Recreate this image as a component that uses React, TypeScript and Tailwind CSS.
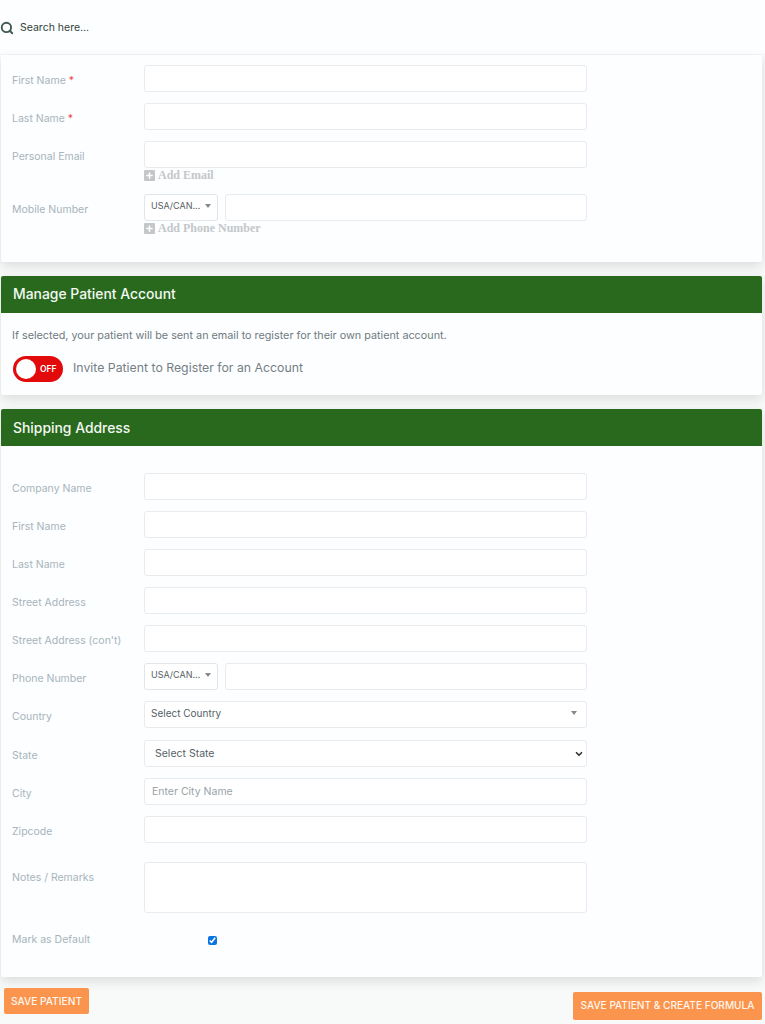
import { Search, Plus, ChevronDown } from "lucide-react";
import type { ReactNode } from "react";

const input = "h-[27px] w-[443px] rounded-[3px] border border-[#e8ecef] bg-white";

function Row({ label, required, children, className }: { label: string; required?: boolean; children: ReactNode; className?: string }) {
  return (
    <div className={`flex items-start ${className ?? ""}`}>
      <label className="w-[143px] shrink-0 pl-[11px] pt-[9px] text-[10.5px] leading-[14px] text-[#a8b4bb]">
        {label}
        {required && <span className="text-[#ef4444]"> *</span>}
      </label>
      {children}
    </div>
  );
}

function AddLink({ text }: { text: string }) {
  return (
    <div className="flex h-[12px] items-center gap-[3px] font-['Liberation_Serif',serif] text-[12px] font-bold leading-[12px] text-[#c4c7c9]">
      <span className="flex h-[11px] w-[11px] items-center justify-center rounded-[1px] bg-[#c4c7c9]">
        <Plus size={9} strokeWidth={4} className="text-white" />
      </span>
      {text}
    </div>
  );
}

function PhoneInput() {
  return (
    <div className="flex w-[443px] gap-[7px]">
      <div className="flex h-[27px] w-[74px] shrink-0 items-center justify-between rounded-[3px] border border-[#e2e6e9] bg-white pb-[3px] pl-[6px] pr-[6px] text-[9px] text-[#555f66]">
        USA/CAN...
        <span className="h-0 w-0 border-x-[3px] border-t-[4px] border-x-transparent border-t-[#888]" />
      </div>
      <div className="h-[27px] flex-1 rounded-[3px] border border-[#e8ecef] bg-white" />
    </div>
  );
}

function CardHeader({ title, className }: { title: string; className?: string }) {
  return (
    <div className={`flex h-[37px] items-center rounded-t-[2px] bg-[#28691e] pl-[12px] text-[13.9px] font-medium text-[#f4f8f2] ${className ?? ""}`}>
      {title}
    </div>
  );
}

export default function App() {
  return (
    <div className="h-[1024px] overflow-hidden bg-[#f8f9f9] font-['Inter',sans-serif]">
      <div className="flex h-[55px] items-center border-b border-[#f4f6f7] bg-[#fcfeff] pt-[1px]">
        <Search size={14} strokeWidth={3.2} className="text-[#3f5a4b]" />
        <span className="ml-[6px] text-[10.5px] text-[#33433b]">Search here...</span>
      </div>

      <div className="ml-[1px] flex h-[207px] w-[761px] flex-col gap-[11px] rounded-b-[2px] bg-[#fcfeff] pt-[10px] shadow-[0_4px_12px_rgba(0,0,0,0.12)]">
        <Row label="First Name" required><div className={input} /></Row>
        <Row label="Last Name" required><div className={input} /></Row>
        <Row label="Personal Email">
          <div>
            <div className={input} />
            <div className="mt-[1px]"><AddLink text="Add Email" /></div>
          </div>
        </Row>
        <Row label="Mobile Number" className="mt-[2px]">
          <div>
            <PhoneInput />
            <div className="mt-[1px]"><AddLink text="Add Phone Number" /></div>
          </div>
        </Row>
      </div>

      <div className="ml-[1px] mt-[14px] h-[119px] w-[761px] rounded-[2px] bg-[#fcfeff] shadow-[0_4px_12px_rgba(0,0,0,0.12)]">
        <CardHeader title="Manage Patient Account" />
        <p className="pl-[11px] pt-[16px] text-[10.8px] leading-[14px] text-[#6f7a80]">
          If selected, your patient will be sent an email to register for their own patient account.
        </p>
        <div className="mt-[13px] flex items-center pl-[12px]">
          <div className="flex h-[26px] w-[50px] items-center rounded-full bg-[#e20a0a] pl-[3px]">
            <span className="h-[20px] w-[20px] rounded-full bg-white" />
            <span className="ml-[4px] text-[8.5px] font-semibold text-white">OFF</span>
          </div>
          <span className="mb-[2px] ml-[10px] text-[12.3px] text-[#767f85]">Invite Patient to Register for an Account</span>
        </div>
      </div>

      <div className="ml-[1px] mt-[14px] h-[568px] w-[761px] rounded-[2px] bg-[#fcfeff] shadow-[0_4px_12px_rgba(0,0,0,0.12)]">
        <CardHeader title="Shipping Address" className="pt-[1px]" />
        <div className="flex flex-col gap-[11px] pt-[27px]">
          <Row label="Company Name"><div className={input} /></Row>
          <Row label="First Name"><div className={input} /></Row>
          <Row label="Last Name"><div className={input} /></Row>
          <Row label="Street Address"><div className={input} /></Row>
          <Row label="Street Address (con't)"><div className={input} /></Row>
          <Row label="Phone Number"><PhoneInput /></Row>
          <Row label="Country">
            <div className={`${input} flex items-center justify-between border-[#e2e6e9] pb-[3px] pl-[6px] pr-[9px] text-[10px] text-[#555f66]`}>
              Select Country
              <span className="h-0 w-0 border-x-[3px] border-t-[4px] border-x-transparent border-t-[#888]" />
            </div>
          </Row>
          <Row label="State" className="mt-[1px]">
            <div className={`${input} flex items-center justify-between pl-[10px] pr-[2px] text-[10.5px] text-[#555f66]`}>
              Select State
              <ChevronDown size={10} strokeWidth={4} className="text-[#333]" />
            </div>
          </Row>
          <Row label="City">
            <div className={`${input} flex items-center pl-[7px] text-[10.5px] text-[#9aa3a8]`}>Enter City Name</div>
          </Row>
          <Row label="Zipcode"><div className={input} /></Row>
          <Row label="Notes / Remarks" className="mt-[8px]">
            <div className="h-[51px] w-[443px] rounded-[3px] border border-[#e8ecef] bg-white" />
          </Row>
          <div className="mt-[8px] flex items-center">
            <label className="w-[207px] shrink-0 pl-[11px] pt-[1px] text-[10.5px] leading-[14px] text-[#a8b4bb]">Mark as Default</label>
            <input type="checkbox" defaultChecked className="mt-[2px] h-[9px] w-[9px] accent-[#0b74de]" />
          </div>
        </div>
      </div>

      <div className="flex items-start justify-between pl-[4px] pr-[3px] pt-[11px]">
        <button className="h-[26px] w-[85px] rounded-[2px] bg-[#fb944c] pt-[1px] text-[10.2px] font-medium text-[#fff6ee]">SAVE PATIENT</button>
        <button className="mt-[4px] h-[28px] w-[189px] rounded-[2px] bg-[#fb944c] text-[10.1px] font-medium text-[#fff6ee]">SAVE PATIENT &amp; CREATE FORMULA</button>
      </div>
    </div>
  );
}
